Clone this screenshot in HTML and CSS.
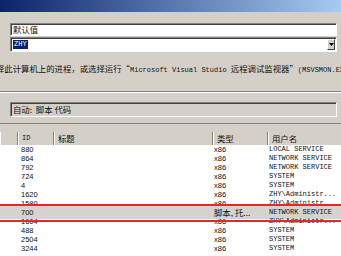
FILE: index.html
```html
<!DOCTYPE html>
<html lang="zh-CN">

<head>
    <meta charset="UTF-8">
    <title>附加到进程</title>
    <link rel="stylesheet" href="styles.css">
</head>

<body>
    <!-- 标题栏 -->
    <div class="titlebar"></div>

    <div class="form">
        <div class="field">默认值</div>
        <div class="combo">
            <span class="sel">ZHY</span>
            <span class="drop">
                <svg width="5" height="3" viewBox="0 0 5 3"><path d="M0 0H5L2.5 3Z" fill="#000"/></svg>
            </span>
        </div>
        <p class="hint">择此计算机上的进程，或选择运行“<span class="en">Microsoft Visual Studio </span>远程调试监视器”<span class="en">(MSVSMON.EXE)</span></p>
        <div class="etched"></div>
        <div class="field readonly">自动:&nbsp; 脚本 代码</div>
    </div>

    <!-- 进程列表 -->
    <div class="list">
        <div class="list-top"></div>
        <div class="head">
            <div class="hcell"></div>
            <div class="hcell en">ID</div>
            <div class="hcell">标题</div>
            <div class="hcell">类型</div>
            <div class="hcell">用户名</div>
        </div>
        <div class="rows">
            <div class="row"><span></span><span class="id">880</span><span></span><span class="type">x86</span><span class="en">LOCAL SERVICE</span></div>
            <div class="row"><span></span><span class="id">864</span><span></span><span class="type">x86</span><span class="en">NETWORK SERVICE</span></div>
            <div class="row"><span></span><span class="id">792</span><span></span><span class="type">x86</span><span class="en">NETWORK SERVICE</span></div>
            <div class="row"><span></span><span class="id">724</span><span></span><span class="type">x86</span><span class="en">SYSTEM</span></div>
            <div class="row"><span></span><span class="id">4</span><span></span><span class="type">x86</span><span class="en">SYSTEM</span></div>
            <div class="row"><span></span><span class="id">1620</span><span></span><span class="type">x86</span><span class="en">ZHY\Administr...</span></div>
            <div class="row"><span></span><span class="id">1580</span><span></span><span class="type">x86</span><span class="en">ZHY\Administr...</span></div>
            <div class="row selected"><span></span><span class="id">700</span><span></span><span class="cn">脚本, 托...</span><span class="en">NETWORK SERVICE</span></div>
            <div class="row"><span></span><span class="id">1604</span><span></span><span class="type">x86</span><span class="en">ZHY\Administr...</span></div>
            <div class="row"><span></span><span class="id">488</span><span></span><span class="type">x86</span><span class="en">SYSTEM</span></div>
            <div class="row"><span></span><span class="id">2504</span><span></span><span class="type">x86</span><span class="en">SYSTEM</span></div>
            <div class="row"><span></span><span class="id">3244</span><span></span><span class="type">x86</span><span class="en">SYSTEM</span></div>
        </div>
        <!-- 红色标注框 -->
        <div class="mark"></div>
    </div>
</body>

</html>
```

FILE: styles.css
```css
body {
    margin: 0;
    width: 341px;
    height: 256px;
    overflow: hidden;
    background-color: #d4d0c8;
    font-family: "Noto Sans CJK SC", sans-serif;
    font-size: 8.4px;
    color: #111;
}

.en {
    font-family: "Liberation Mono", monospace;
    font-size: 7px;
}

.titlebar {
    height: 12px;
    background: linear-gradient(to right, #0a246a, #a6caf0);
}

.form {
    padding: 11px 4px 0 10px;
}

.field {
    height: 11px;
    line-height: 11px;
    padding-left: 2px;
    background-color: white;
    border: 1px solid;
    border-color: #808080 #fff #fff #808080;
    box-shadow: inset 1px 1px 0 #404040;
}

.combo {
    display: flex;
    justify-content: space-between;
    height: 11px;
    margin-top: 1px;
    padding: 1px;
    background-color: white;
    border: 1px solid;
    border-color: #808080 #fff #fff #808080;
    box-shadow: inset 1px 1px 0 #404040;
}

.combo .sel {
    margin: 1px 0 0 1px;
    padding: 0 1px;
    height: 9px;
    line-height: 9px;
    background-color: #0a246a;
    color: white;
    font-family: "Liberation Mono", monospace;
    font-size: 7px;
}

.combo .drop {
    display: flex;
    align-items: center;
    justify-content: center;
    width: 6px;
    background-color: #d4d0c8;
    border: 1px solid;
    border-color: #fff #404040 #404040 #fff;
}

.hint {
    margin: 10px 0 0 -14px;
    height: 12px;
    line-height: 12px;
    white-space: nowrap;
}

.etched {
    margin: 17px -4px 0 -10px;
    height: 0;
    border-top: 1px solid #808080;
    border-bottom: 1px solid #fff;
}

.readonly {
    margin-top: 9px;
    height: 13px;
    line-height: 13px;
    background-color: #d4d0c8;
}

.list {
    position: relative;
    margin-top: 6px;
}

.list-top {
    height: 8px;
    border-top: 1px solid #808080;
}

.head,
.row {
    display: grid;
    grid-template-columns: 17px 36px 159px 55px 1fr;
}

.head {
    height: 13px;
    line-height: 13px;
}

.hcell {
    padding-left: 4px;
    border-left: 1px solid #808080;
    box-shadow: inset 1px 0 0 #fff;
}

.hcell:first-child {
    border-left: none;
}

.rows {
    background-color: white;
    height: 120px;
}

.row {
    height: 9px;
    line-height: 9px;
}

.row .id {
    padding-left: 4px;
    font-family: "Liberation Sans", sans-serif;
    font-size: 7.5px;
}

.row .type {
    padding-left: 2px;
    font-family: "Liberation Sans", sans-serif;
    font-size: 7.5px;
}

.row .cn {
    padding-left: 2px;
    white-space: nowrap;
    overflow: hidden;
}

.row .en {
    padding-left: 2px;
}

.selected {
    background-color: #d6d3ce;
    box-shadow: 0 -2px 0 #d6d3ce, 0 2px 0 #d6d3ce;
}

.mark {
    position: absolute;
    left: -3px;
    right: -3px;
    top: 81px;
    height: 14px;
    border: 2px solid #e02a2a;
}
```
